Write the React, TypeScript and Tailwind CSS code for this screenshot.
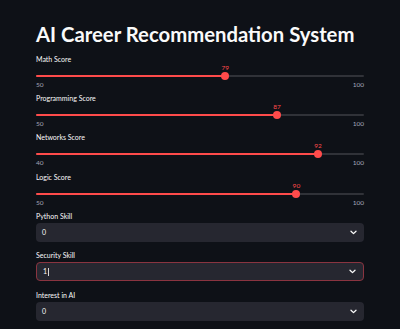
import React from 'react';

type SliderItem = { label: string; value: number; min: number; max: number };

const sliders: SliderItem[] = [
  { label: 'Math Score', value: 79, min: 50, max: 100 },
  { label: 'Programming Score', value: 87, min: 50, max: 100 },
  { label: 'Networks Score', value: 92, min: 40, max: 100 },
  { label: 'Logic Score', value: 90, min: 50, max: 100 },
];

const font = { fontFamily: 'Lato, "Noto Sans", sans-serif' };

function Chevron() {
  return (
    <svg width="7" height="5" viewBox="0 0 7 5" className="text-[#fafafa]">
      <path d="M1 1.2 L3.5 3.6 L6 1.2" fill="none" stroke="currentColor" strokeWidth="1.3" strokeLinecap="round" strokeLinejoin="round" />
    </svg>
  );
}

function Slider({ item, className }: { item: SliderItem; className?: string }) {
  const frac = (item.value - item.min) / (item.max - item.min);
  const center = 2 + frac * 323;
  return (
    <div className={className}>
      <div className="h-[9px] text-[7px] leading-[9px] text-[#fafafa]">{item.label}</div>
      <div className="relative h-[17px] pt-[11px]">
        <div
          className="absolute top-0 text-[6.5px] leading-[8px] text-[#ff4b4b] -translate-x-1/2"
          style={{ left: center }}
        >
          {item.value}
        </div>
        <div className="relative h-[2px] rounded-full bg-[#303238]">
          <div className="absolute left-0 top-0 h-[2px] rounded-full bg-[#ff4b4b]" style={{ width: center }} />
          <div
            className="absolute top-[-3px] h-[8px] w-[8px] rounded-full bg-[#ff4b4b]"
            style={{ left: center - 4 }}
          />
        </div>
      </div>
      <div className="flex h-[8px] justify-between text-[6.5px] leading-[8px] text-[#a3a8b8]">
        <span>{item.min}</span>
        <span>{item.max}</span>
      </div>
    </div>
  );
}

function Select({ label, value, focused, className }: { label: string; value: string; focused?: boolean; className?: string }) {
  return (
    <div className={className}>
      <div className="h-[9px] text-[7px] leading-[9px] text-[#fafafa]">{label}</div>
      <div
        className={
          'mt-[2px] flex h-[19px] items-center justify-between rounded-[4px] bg-[#262730] pl-[6px] pr-[7px] ' +
          (focused ? 'border border-[#8a3440] pl-[5px]' : '')
        }
      >
        <div className="flex items-center text-[7px] leading-[9px] text-[#fafafa]">
          {value}
          {focused && <span className="ml-[1px] inline-block h-[8px] w-px bg-[#d8d8d8]" />}
        </div>
        <Chevron />
      </div>
    </div>
  );
}

export default function App() {
  return (
    <div className="min-h-screen w-full bg-[#0e1117]" style={font}>
      <div className="mx-auto w-[328px] pt-[22px]">
        <h1 className="h-[24px] text-[20.3px] font-bold leading-[24px] text-[#fafafa] whitespace-nowrap">
          AI Career Recommendation System
        </h1>
        <Slider item={sliders[0]} className="mt-[9px] h-[39px]" />
        <Slider item={sliders[1]} className="h-[39px]" />
        <Slider item={sliders[2]} className="h-[40px]" />
        <Slider item={sliders[3]} className="h-[39px]" />
        <Select label="Python Skill" value="0" className="h-[39px]" />
        <Select label="Security Skill" value="1" focused className="h-[40px]" />
        <Select label="Interest in AI" value="0" />
      </div>
    </div>
  );
}
